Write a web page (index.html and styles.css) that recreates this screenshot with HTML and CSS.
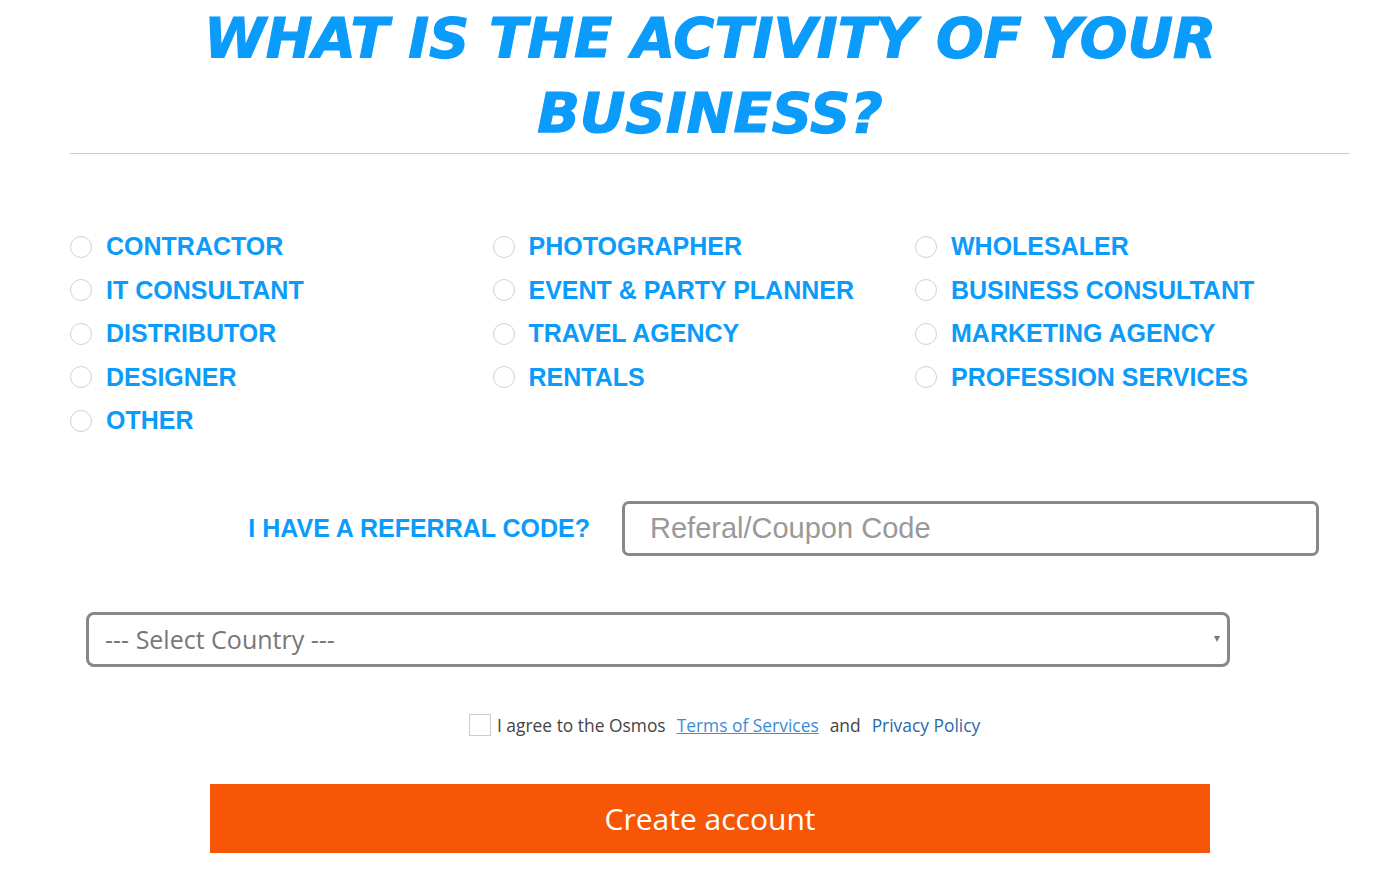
FILE: index.html
```html
<!DOCTYPE html>
<html>
<head>
  <meta charset="utf-8">
  <link rel="stylesheet" href="styles.css">
</head>
<body>
  <div class="page">
    <h1 class="heading">WHAT IS THE ACTIVITY OF YOUR BUSINESS?</h1>

    <div class="activity-grid">
      <label class="option"><span class="radio"></span>CONTRACTOR</label>
      <label class="option"><span class="radio"></span>PHOTOGRAPHER</label>
      <label class="option"><span class="radio"></span>WHOLESALER</label>
      <label class="option"><span class="radio"></span>IT CONSULTANT</label>
      <label class="option"><span class="radio"></span>EVENT &amp; PARTY PLANNER</label>
      <label class="option"><span class="radio"></span>BUSINESS CONSULTANT</label>
      <label class="option"><span class="radio"></span>DISTRIBUTOR</label>
      <label class="option"><span class="radio"></span>TRAVEL AGENCY</label>
      <label class="option"><span class="radio"></span>MARKETING AGENCY</label>
      <label class="option"><span class="radio"></span>DESIGNER</label>
      <label class="option"><span class="radio"></span>RENTALS</label>
      <label class="option"><span class="radio"></span>PROFESSION SERVICES</label>
      <label class="option"><span class="radio"></span>OTHER</label>
    </div>

    <div class="referral-row">
      <div class="referral-label">I HAVE A REFERRAL CODE?</div>
      <input class="referral-input" type="text" placeholder="Referal/Coupon Code">
    </div>

    <div class="country-select">
      <select>
        <option>--- Select Country ---</option>
      </select>
    </div>

    <div class="agree-row">
      <span class="checkbox"></span>
      <span class="agree-text">I agree to the Osmos</span>
      <a class="terms-link" href="#">Terms of Services</a>
      <span class="agree-text">and</span>
      <a class="privacy-link" href="#">Privacy Policy</a>
    </div>

    <button class="create-btn">Create account</button>
  </div>
</body>
</html>
```

FILE: styles.css
```css
body {
  margin: 0;
  padding: 0;
  background: #fff;
  font-family: 'Open Sans', sans-serif;
}

.page {
  width: 1280px;
  margin-left: 70px;
}

.heading {
  margin: 0;
  padding-bottom: 3px;
  border-bottom: 1px solid #ccc;
  font-family: 'DejaVu Sans', sans-serif;
  font-weight: bold;
  font-style: italic;
  font-size: 56px;
  line-height: 75px;
  text-align: center;
  color: #0b9bfa;
  -webkit-text-stroke: 1.2px #0b9bfa;
}

.activity-grid {
  display: grid;
  grid-template-columns: repeat(3, 422.5px);
  grid-auto-rows: 43.5px;
  margin-top: 71px;
}

.option {
  display: flex;
  align-items: center;
  gap: 14px;
  font-family: 'Liberation Sans', Arial, sans-serif;
  font-weight: bold;
  font-size: 25px;
  color: #0b9bfa;
}

.radio {
  width: 20px;
  height: 20px;
  border: 1px solid #d2d2d2;
  border-radius: 50%;
  flex-shrink: 0;
}

.referral-row {
  display: flex;
  align-items: center;
  gap: 32px;
  margin-top: 58px;
}

.referral-label {
  width: 520px;
  text-align: right;
  font-family: 'Liberation Sans', Arial, sans-serif;
  font-weight: bold;
  font-size: 25px;
  color: #0b9bfa;
}

.referral-input {
  width: 697px;
  height: 55px;
  box-sizing: border-box;
  border: 3px solid #888;
  border-radius: 7px;
  padding: 0 25px;
  font-family: 'Liberation Sans', Arial, sans-serif;
  font-size: 29px;
  color: #555;
  outline: none;
}

.referral-input::placeholder {
  color: #999;
}

.country-select {
  position: relative;
  width: 1144px;
  margin: 56px 0 0 16px;
}

.country-select select {
  width: 100%;
  height: 55px;
  box-sizing: border-box;
  border: 3px solid #888;
  border-radius: 8px;
  padding: 0 16px;
  background: #fff;
  appearance: none;
  font-family: 'Open Sans', sans-serif;
  font-size: 25px;
  color: #777;
  outline: none;
}

.country-select::after {
  content: "";
  position: absolute;
  right: 10px;
  top: 24px;
  border-left: 3.5px solid transparent;
  border-right: 3.5px solid transparent;
  border-top: 6px solid #777;
}

.agree-row {
  display: flex;
  align-items: center;
  padding-left: 399px;
  margin-top: 46px;
  font-size: 17.4px;
  color: #444;
}

.checkbox {
  width: 20px;
  height: 20px;
  border: 1px solid #ccc;
  margin-right: 6px;
}

.terms-link {
  margin: 0 11px;
  color: #3b8dd8;
  text-decoration: underline;
}

.privacy-link {
  margin-left: 11px;
  color: #2a69a8;
  text-decoration: none;
}

.create-btn {
  display: block;
  width: 1000px;
  height: 69px;
  margin: 47px 0 0 140px;
  border: none;
  background: #f75606;
  color: #fff;
  font-family: 'Open Sans', sans-serif;
  font-size: 30px;
  cursor: pointer;
}
```
